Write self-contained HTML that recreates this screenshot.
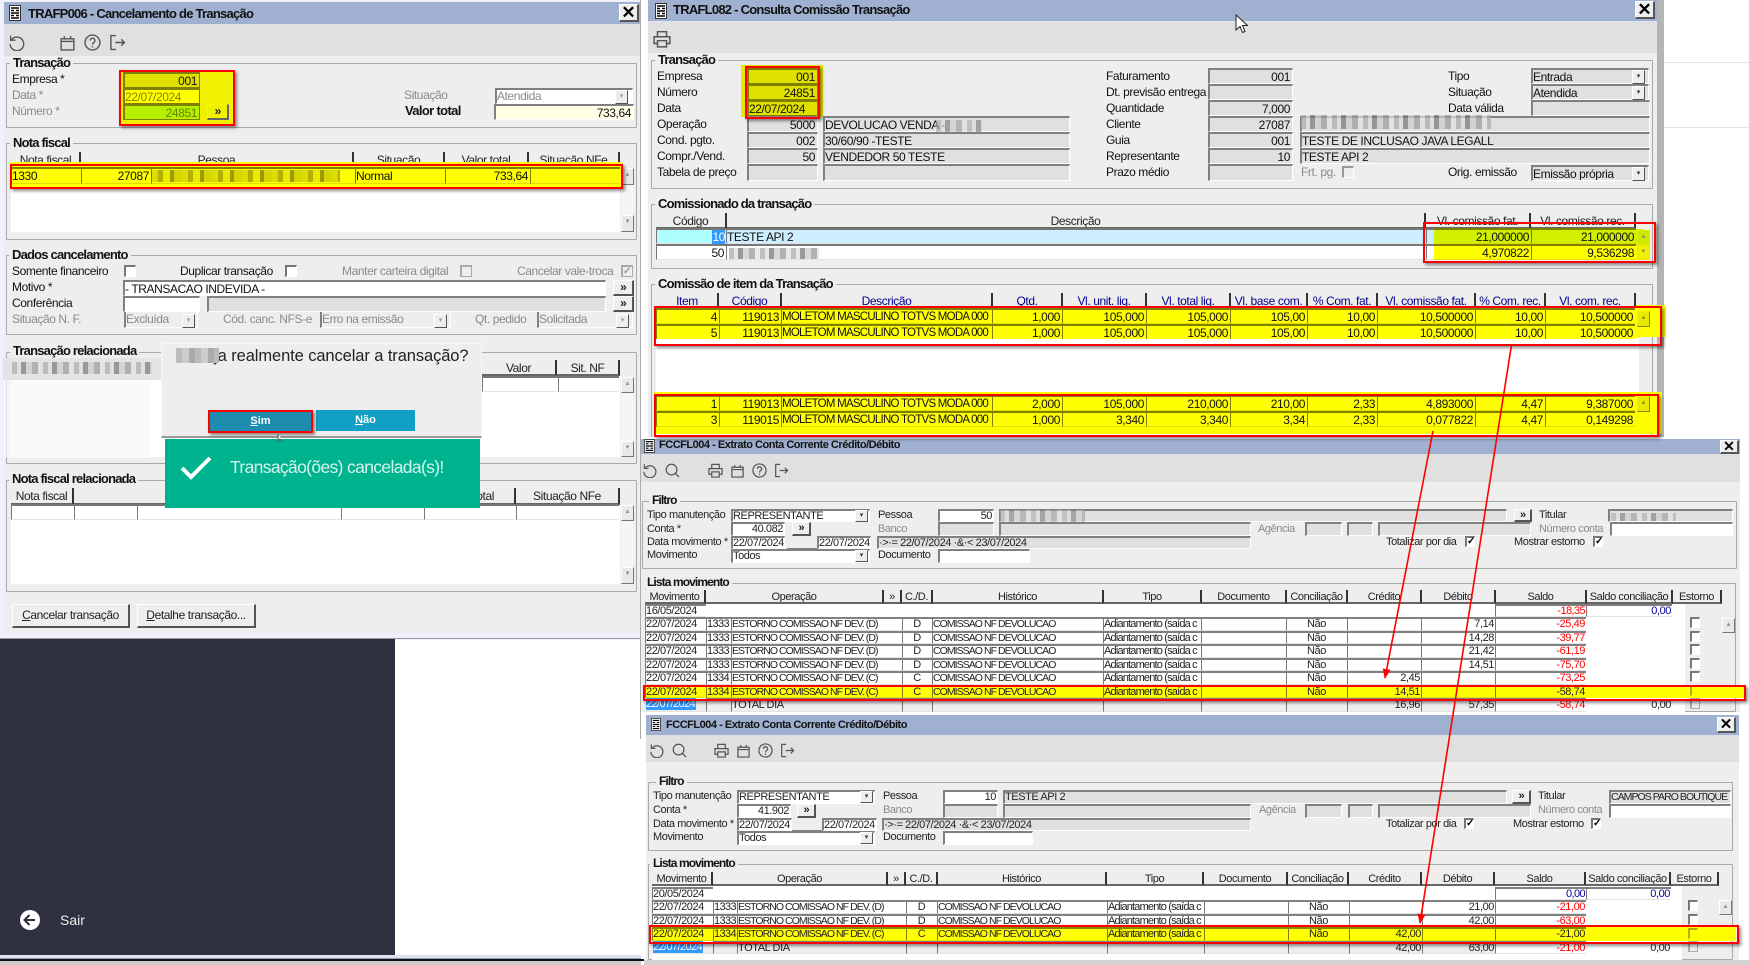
<!DOCTYPE html>
<html lang="pt"><head><meta charset="utf-8"><title>Transação</title>
<style>
html,body{margin:0;padding:0;background:#fff}
#p{position:relative;width:1749px;height:965px;overflow:hidden;background:#fff;font:12px/14px "Liberation Sans",sans-serif;letter-spacing:-.4px;color:#111}
#p div,#p span,#p i,#p b,#p svg{position:absolute;font-style:normal;white-space:nowrap;box-sizing:border-box}
.tt{font-weight:bold;font-size:13px;letter-spacing:-.75px;color:#111;line-height:16px}
.x{background:#eee;border:1px solid #fff;border-right:2px solid #555;border-bottom:2px solid #555;font:bold 17px/15px "Liberation Sans";letter-spacing:0;text-align:center;color:#000}
.fs{border:1px solid #a9a9a9;border-radius:1px}
.lg{font-weight:bold;font-size:13px;letter-spacing:-.8px;background:#eee;padding:0 3px;line-height:14px;color:#111}
.l{line-height:14px}
.d{color:#8a8a8a}
.f{border-top:2px solid #808080;border-left:2px solid #808080;border-right:1px solid #fff;border-bottom:1px solid #fff;padding:0 2px 0 0;line-height:14px;overflow:hidden;background:#fff}
.g{background:#e0e0e0}
.ra{text-align:right}
.u{font-size:11.5px;letter-spacing:-.75px}
.bt{background:#eee;border:1px solid #fff;border-right:2px solid #555;border-bottom:2px solid #555;text-align:center;line-height:12px;font-weight:bold;color:#222;letter-spacing:-1px}
.cb{width:12px;height:12px;border:1px solid #fff;border-top:2px solid #777;border-left:2px solid #777;background:#fff}
.cd{border-color:#aaa;background:#eee}
.sb{width:13px;background:#e9e9e9;border:1px solid #fff;border-right:1px solid #777;border-bottom:1px solid #777;color:#888;font-size:7px;line-height:12px;text-align:center;letter-spacing:0}
.sel{width:13px;height:14px;background:#eee;border:1px solid #fff;border-right:1px solid #555;border-bottom:1px solid #555;font-size:7px;line-height:12px;text-align:center;letter-spacing:0;color:#333}
.h{background:#eee;border-right:2px solid #333;border-bottom:2px solid #666;text-align:center;line-height:16px;overflow:hidden;color:#222}
.hb{color:#00008b}
.rd{border:2px solid #f00;box-shadow:2px 2px 3px rgba(0,0,0,.45);z-index:30}
.rw{left:0;width:0;height:16px}
.rw i{top:0;height:100%;border-top:2px solid #777;border-left:1px solid #777;border-bottom:1px solid #e4e4e4;background:#fff;line-height:14px;padding:0 2px 0 0;overflow:hidden}
.y i{background:#ff0;border-top-color:#808000;border-left-color:#808000;border-bottom-color:#e0e000}
.r{text-align:right}.m{text-align:center}
.n{color:#f00}.bl{color:#00009a}
.blur{background:repeating-linear-gradient(90deg,#aaa 0 5px,#ddd 5px 9px,#777 9px 14px,#ccc 14px 20px,#999 20px 26px,#e2e2e2 26px 31px)}
.s2{font-size:11px;line-height:13px;letter-spacing:-.42px;color:#222}
.s2 .u2,.u2{font-size:10.5px;letter-spacing:-.95px}
.s2 .h{line-height:13px;padding-top:1px}
.s2 .rw{height:13.5px}
.s2 .rw i{line-height:11px;padding:0 1px 0 0;border-top:2px solid #808080}
.s2 .rw i:nth-child(6){letter-spacing:-.82px}
.s2 .rw i:nth-child(2){letter-spacing:-.6px}
.s2 .y i{border-top-color:#888800}
.s2 .f{line-height:11px;padding:0 1px 0 0}
.s2 .lg{font-size:12px;line-height:13px;letter-spacing:-.9px}
.s2 .l{line-height:13px}
.s2 .bt{line-height:10px}
.s2 .cb{width:10px;height:11px;font-size:10px;line-height:8px;letter-spacing:0;text-align:center;font-weight:bold;color:#000}
.s2 .sel{height:12px;line-height:9px}
.s2 .hh{height:14px}
.s2 .tt{font-size:11px;letter-spacing:-.48px}
svg.ic{fill:none;stroke:#555;stroke-width:1.3}
</style></head>
<body><div id="p">
<svg width="0" height="0" style="left:0;top:0"><defs>
<symbol id="iu" viewBox="0 0 16 16"><path d="M3.5 5.2A6.4 6.4 0 1 1 2 9.5"/><path d="M2.5 1.5V5.8H7"/></symbol>
<symbol id="ic" viewBox="0 0 16 16"><path d="M2 4.5h12v10.5H2zM2 7h12M5 2v2.5M11 2v2.5"/></symbol>
<symbol id="ih" viewBox="0 0 16 16"><circle cx="8" cy="8" r="7"/><path d="M5.8 6.2a2.2 2.2 0 1 1 3.3 1.9c-.8.5-1.1 1-1.1 2M8 11.3v1.3"/></symbol>
<symbol id="ie" viewBox="0 0 16 16"><path d="M6.5 1.5H1.8v13h4.7M6 8h8.5M11.5 5l3 3-3 3"/></symbol>
<symbol id="ip" viewBox="0 0 16 16"><path d="M4 6V1.5h8V6M4 12H1V6h14v6h-3M4 9.5h8v5.5H4z"/></symbol>
<symbol id="is" viewBox="0 0 16 16"><circle cx="7" cy="7" r="5.7"/><path d="M11 11l4 4"/></symbol>
<symbol id="doc" viewBox="0 0 12 16"><rect x=".5" y=".5" width="11" height="15" fill="#fff" stroke="#333"/><path d="M2 3h8M2 5.5h3M7 5.5h3M2 8h8M2 10.5h3M7 10.5h3M2 13h8" stroke="#000" stroke-width="1.4"/></symbol>
</defs></svg>

<!-- LEFT WINDOW -->
<div style="left:0;top:0;width:640px;height:640px;background:#f1f1fb"></div>
<div style="left:640px;top:0;width:1px;height:739px;background:#aaa"></div>
<div style="left:4px;top:2px;width:636px;height:22px;background:#9fb0d0"></div>
<div style="left:4px;top:24px;width:636px;height:32px;background:#e0e0e0"></div>
<div style="left:4px;top:56px;width:636px;height:577px;background:#eee"></div>
<svg style="left:9px;top:5px" width="12" height="16"><use href="#doc"/></svg>
<div class="tt" style="left:28px;top:6px">TRAFP006 - Cancelamento de Transação</div>
<div class="x" style="left:619px;top:4px;width:20px;height:18px">✕</div>
<svg class="ic" style="left:8px;top:34px" width="17" height="17"><use href="#iu"/></svg>
<svg class="ic" style="left:59px;top:34px" width="17" height="17"><use href="#ic"/></svg>
<svg class="ic" style="left:84px;top:34px" width="17" height="17"><use href="#ih"/></svg>
<svg class="ic" style="left:109px;top:34px" width="17" height="17"><use href="#ie"/></svg>

<div class="fs" style="left:6px;top:63px;width:631px;height:65px"></div>
<div class="lg" style="left:10px;top:56px">Transação</div>
<div class="l" style="left:12px;top:72px">Empresa *</div>
<div class="l d" style="left:12px;top:88px">Data *</div>
<div class="l d" style="left:12px;top:104px">Número *</div>
<div style="left:120px;top:71px;width:114px;height:54px;background:#f0f000"></div>
<div class="f ra" style="left:123px;top:72px;width:77px;height:16px;background:#e0e000;border-color:#808000">001</div>
<div class="f" style="left:123px;top:88px;width:77px;height:16px;background:#ff0;color:#868600;border-color:#808000">22/07/2024</div>
<div class="f ra" style="left:123px;top:104px;width:77px;height:16px;background:#b4f000;color:#6a8000;border-color:#808000">24851</div>
<div class="bt" style="left:207px;top:104px;width:22px;height:16px;background:#f0f000;border-color:#f8f800 #666 #666 #f8f800">»</div>
<div class="rd" style="left:119px;top:70px;width:116px;height:56px"></div>
<div class="l d" style="left:404px;top:88px">Situação</div>
<div class="f d" style="left:495px;top:88px;width:138px;height:16px;line-height:12px">Atendida</div>
<div class="sel" style="left:615px;top:90px;color:#999">▾</div>
<b class="l" style="left:405px;top:104px;font-size:13px;letter-spacing:-.65px">Valor total</b>
<div class="f ra" style="left:494px;top:104px;width:140px;height:16px;background:#ffffe6">733,64</div>

<div class="fs" style="left:6px;top:143px;width:631px;height:97px"></div>
<div class="lg" style="left:10px;top:136px">Nota fiscal</div>
<div style="left:11px;top:188px;width:609px;height:44px;background:#fff"></div>
<div class="h" style="left:12px;top:152px;width:69px;height:16px">Nota fiscal</div>
<div class="h" style="left:81px;top:152px;width:273px;height:16px">Pessoa</div>
<div class="h" style="left:354px;top:152px;width:91px;height:16px">Situação</div>
<div class="h" style="left:445px;top:152px;width:84px;height:16px">Valor total</div>
<div class="h" style="left:529px;top:152px;width:91px;height:16px">Situação NFe</div>
<div style="left:9px;top:162px;width:613px;height:26px;background:#ff0"></div>
<div class="rw y" style="top:167px;height:17px"><i style="left:11px;width:70px">1330</i><i class="r" style="left:81px;width:70px">27087</i><i style="left:151px;width:204px"></i><i style="left:355px;width:90px">Normal</i><i class="r" style="left:445px;width:85px">733,64</i><i style="left:530px;width:90px"></i></div>
<div style="left:152px;top:170px;width:188px;height:12px;background:repeating-linear-gradient(90deg,#d8d800 0 6px,#a8a800 6px 11px,#e8e800 11px 18px,#909000 18px 22px,#d0d000 22px 30px);opacity:.9"></div>
<div class="sb" style="left:621px;top:168px;height:17px">▴</div>
<div class="sb" style="left:621px;top:215px;height:17px">▾</div>
<div style="left:621px;top:185px;width:13px;height:30px;background:#f5f5f5"></div>
<div class="rd" style="left:10px;top:164px;width:613px;height:25px"></div>

<div class="fs" style="left:6px;top:255px;width:631px;height:80px"></div>
<div class="lg" style="left:9px;top:248px">Dados cancelamento</div>
<div class="l" style="left:12px;top:264px">Somente financeiro</div>
<div class="cb" style="left:124px;top:265px"></div>
<div class="l" style="left:180px;top:264px">Duplicar transação</div>
<div class="cb" style="left:285px;top:265px"></div>
<div class="l d" style="left:342px;top:264px">Manter carteira digital</div>
<div class="cb cd" style="left:460px;top:265px"></div>
<div class="l d" style="left:517px;top:264px">Cancelar vale-troca</div>
<div class="cb cd" style="left:621px;top:265px;color:#999;font:bold 10px/9px 'Liberation Sans'">✓</div>
<div class="l" style="left:12px;top:280px">Motivo *</div>
<div class="f" style="left:123px;top:280px;width:483px;height:16px">- TRANSACAO INDEVIDA -</div>
<div class="bt" style="left:613px;top:280px;width:21px;height:16px">»</div>
<div class="l" style="left:12px;top:296px">Conferência</div>
<div class="f" style="left:123px;top:296px;width:77px;height:16px"></div>
<div class="f g" style="left:207px;top:296px;width:399px;height:16px"></div>
<div class="bt" style="left:613px;top:296px;width:21px;height:16px">»</div>
<div class="l d" style="left:12px;top:312px">Situação N. F.</div>
<div class="f d" style="left:124px;top:312px;width:74px;height:16px;background:#eee;border-top:0">Excluída</div>
<div class="sel" style="left:182px;top:314px;color:#999">▾</div>
<div class="l d" style="left:223px;top:312px">Cód. canc. NFS-e</div>
<div class="f d" style="left:320px;top:312px;width:131px;height:16px;background:#eee;border-top:0">Erro na emissão</div>
<div class="sel" style="left:434px;top:314px;color:#999">▾</div>
<div class="l d" style="left:475px;top:312px">Qt. pedido</div>
<div class="f d" style="left:537px;top:312px;width:96px;height:16px;background:#eee;border-top:0">Solicitada</div>
<div class="sel" style="left:616px;top:314px;color:#999">▾</div>

<div class="fs" style="left:6px;top:352px;width:631px;height:112px"></div>
<div style="left:11px;top:376px;width:609px;height:81px;background:#fff"></div>
<div class="lg" style="left:10px;top:344px">Transação relacionada</div>
<div style="left:3px;top:358px;width:160px;height:22px;background:#e4e4e4"></div>
<div class="blur" style="left:12px;top:362px;width:140px;height:12px;opacity:.7"></div>
<div style="left:3px;top:380px;width:148px;height:78px;background:#f8f8f8;opacity:.7"></div>
<div class="h" style="left:482px;top:360px;width:75px;height:16px">Valor</div>
<div class="h" style="left:557px;top:360px;width:63px;height:16px">Sit. NF</div>
<div class="rw" style="top:376px;height:16px"><i style="left:482px;width:76px"></i><i style="left:558px;width:61px"></i></div>
<div class="sb" style="left:621px;top:377px;height:16px">▴</div>
<div class="sb" style="left:621px;top:441px;height:16px">▾</div>
<div style="left:621px;top:393px;width:13px;height:48px;background:#f5f5f5"></div>

<div class="fs" style="left:6px;top:480px;width:631px;height:112px"></div>
<div style="left:11px;top:505px;width:609px;height:79px;background:#fff"></div>
<div class="lg" style="left:9px;top:472px">Nota fiscal relacionada</div>
<div class="h" style="left:11px;top:488px;width:63px;height:17px">Nota fiscal</div>
<div class="h" style="left:74px;top:488px;width:442px;height:17px;text-align:right;padding-right:20px">Valor total</div>
<div class="h" style="left:516px;top:488px;width:104px;height:17px">Situação NFe</div>
<div class="rw" style="top:504px;height:16px"><i style="left:11px;width:63px"></i><i style="left:74px;width:63px"></i><i style="left:137px;width:204px"></i><i style="left:341px;width:83px"></i><i style="left:424px;width:92px"></i><i style="left:516px;width:103px"></i></div>
<div class="sb" style="left:621px;top:505px;height:16px">▴</div>
<div class="sb" style="left:621px;top:567px;height:17px">▾</div>
<div style="left:621px;top:521px;width:13px;height:46px;background:#f5f5f5"></div>
<div class="bt" style="left:12px;top:604px;width:118px;height:24px;line-height:21px;font-weight:normal;letter-spacing:-.4px"><u>C</u>ancelar transação</div>
<div class="bt" style="left:137px;top:604px;width:119px;height:24px;line-height:21px;font-weight:normal;letter-spacing:-.4px"><u>D</u>etalhe transação...</div>

<!-- dialog -->
<div style="left:161px;top:343px;width:321px;height:95px;background:#eee;border:1px solid #f6f6f6;border-bottom:2px solid #999"></div>
<div style="left:176px;top:347px;font-size:16.5px;line-height:18px;letter-spacing:-.1px;color:#222">Deseja realmente cancelar a transação?</div>
<div style="left:176px;top:348px;width:43px;height:15px;background:repeating-linear-gradient(90deg,#bbb 0 6px,#ccc 6px 13px,#aaa 13px 19px)"></div>
<div style="left:210px;top:412px;width:101px;height:19px;background:#1e8cae;color:#fff;font:bold 11px/19px 'Liberation Sans';letter-spacing:0;text-align:center"><u>S</u>im</div>
<div class="rd" style="left:208px;top:410px;width:105px;height:23px"></div>
<div style="left:316px;top:410px;width:99px;height:21px;background:#11a0c4;color:#fff;font:bold 11px/21px 'Liberation Sans';letter-spacing:0;text-align:center"><u>N</u>ão</div>
<div style="left:165px;top:439px;width:315px;height:69px;background:#00b38f"></div>
<svg style="left:180px;top:456px" width="32" height="24"><path d="M2 12l9 9L30 2" fill="none" stroke="#fff" stroke-width="4"/></svg>
<div style="left:230px;top:457px;font-size:17.5px;line-height:20px;letter-spacing:-.65px;color:#d5f3ec">Transação(ões) cancelada(s)!</div>
<svg style="left:277px;top:434px" width="9" height="8"><path d="M1 0v7l2-2 3 2" fill="#fff" stroke="#555"/></svg>

<!-- sidebar -->
<div style="left:0;top:633px;width:640px;height:6px;background:#f1f1fb;border-bottom:1px solid #999"></div>
<div style="left:0;top:639px;width:395px;height:316px;background:#2f3140"></div>
<svg style="left:19px;top:909px" width="22" height="22"><circle cx="11" cy="11" r="10" fill="#fff"/><path d="M16 11H6M10.5 6l-5 5 5 5" fill="none" stroke="#2f3140" stroke-width="2"/></svg>
<div style="left:60px;top:912px;color:#eee;font-size:14px;line-height:16px;letter-spacing:0">Sair</div>
<div style="left:0;top:955px;width:641px;height:3px;background:#dfe3ee"></div>
<div style="left:0;top:958px;width:641px;height:1px;background:#8fa0b8"></div>
<div style="left:0;top:959px;width:644px;height:2px;background:#111"></div>
<div style="left:0;top:961px;width:641px;height:4px;background:#ccc"></div>

<!-- white-side hairlines -->
<div style="left:1664px;top:62px;width:85px;height:1px;background:#e2e2e2"></div>
<div style="left:1664px;top:127px;width:85px;height:1px;background:#e2e2e2"></div>

<!-- TOP RIGHT WINDOW -->
<div style="left:648px;top:0;width:1009px;height:21px;background:#9fb0d0"></div>
<div style="left:648px;top:21px;width:1009px;height:1px;background:#dfe6f2"></div>
<div style="left:648px;top:22px;width:1009px;height:31px;background:#e0e0e0"></div>
<div style="left:648px;top:53px;width:1009px;height:384px;background:#eee"></div>
<div style="left:1657px;top:0;width:7px;height:437px;background:#b4b4b4"></div>
<svg style="left:655px;top:3px" width="12" height="16"><use href="#doc"/></svg>
<div class="tt" style="left:673px;top:2px">TRAFL082 - Consulta Comissão Transação</div>
<div class="x" style="left:1635px;top:1px;width:20px;height:18px">✕</div>
<svg style="left:1235px;top:14px" width="13" height="20"><path d="M1 1v15l4-3.5 2.5 6 2.5-1-2.5-6h5z" fill="#fff" stroke="#222"/></svg>
<svg class="ic" style="left:653px;top:30px" width="18" height="18"><use href="#ip"/></svg>

<div class="fs" style="left:651px;top:60px;width:1002px;height:129px"></div>
<div class="lg" style="left:655px;top:53px">Transação</div>
<div class="l" style="left:657px;top:69px">Empresa</div>
<div class="l" style="left:657px;top:85px">Número</div>
<div class="l" style="left:657px;top:101px">Data</div>
<div class="l" style="left:657px;top:117px">Operação</div>
<div class="l" style="left:657px;top:133px">Cond. pgto.</div>
<div class="l" style="left:657px;top:149px">Compr./Vend.</div>
<div class="l" style="left:657px;top:165px">Tabela de preço</div>
<div style="left:741px;top:65px;width:82px;height:52px;background:#e8e800"></div>
<div class="f g ra" style="left:747px;top:68px;width:71px;height:16px;background:#e0e000;border-color:#808000">001</div>
<div class="f g ra" style="left:747px;top:84px;width:71px;height:16px;background:#e0e000;border-color:#808000">24851</div>
<div class="f g" style="left:747px;top:100px;width:71px;height:16px;background:#e0e000;border-color:#808000">22/07/2024</div>
<div class="rd" style="left:745px;top:66px;width:75px;height:53px"></div>
<div class="f g ra" style="left:747px;top:116px;width:71px;height:16px">5000</div>
<div class="f g ra" style="left:747px;top:132px;width:71px;height:16px">002</div>
<div class="f g ra" style="left:747px;top:148px;width:71px;height:16px">50</div>
<div class="f g" style="left:747px;top:164px;width:71px;height:17px"></div>
<div class="f g" style="left:823px;top:116px;width:247px;height:16px">DEVOLUCAO VENDA -</div>
<div class="blur" style="left:936px;top:120px;width:46px;height:12px;opacity:.6"></div>
<div class="f g" style="left:823px;top:132px;width:247px;height:16px">30/60/90 -TESTE</div>
<div class="f g" style="left:823px;top:148px;width:247px;height:16px">VENDEDOR 50 TESTE</div>
<div class="f g" style="left:823px;top:164px;width:247px;height:17px"></div>
<div class="l" style="left:1106px;top:69px">Faturamento</div>
<div class="l" style="left:1106px;top:85px">Dt. previsão entrega</div>
<div class="l" style="left:1106px;top:101px">Quantidade</div>
<div class="l" style="left:1106px;top:117px">Cliente</div>
<div class="l" style="left:1106px;top:133px">Guia</div>
<div class="l" style="left:1106px;top:149px">Representante</div>
<div class="l" style="left:1106px;top:165px">Prazo médio</div>
<div class="f g ra" style="left:1208px;top:68px;width:85px;height:16px">001</div>
<div class="f g ra" style="left:1208px;top:84px;width:85px;height:16px"></div>
<div class="f g ra" style="left:1208px;top:100px;width:85px;height:16px">7,000</div>
<div class="f g ra" style="left:1208px;top:116px;width:85px;height:16px">27087</div>
<div class="f g ra" style="left:1208px;top:132px;width:85px;height:16px">001</div>
<div class="f g ra" style="left:1208px;top:148px;width:85px;height:16px">10</div>
<div class="f g ra" style="left:1208px;top:164px;width:85px;height:17px"></div>
<div class="f g" style="left:1300px;top:116px;width:350px;height:16px"></div>
<div class="blur" style="left:1301px;top:115px;width:190px;height:14px;opacity:.7"></div>
<div class="f g" style="left:1300px;top:132px;width:350px;height:16px">TESTE DE INCLUSAO JAVA LEGALL</div>
<div class="f g" style="left:1300px;top:148px;width:350px;height:16px">TESTE API 2</div>
<div class="l d" style="left:1301px;top:165px">Frt. pg.</div>
<div class="cb cd" style="left:1342px;top:166px;border-color:#999 #fff #fff #999"></div>
<div class="l" style="left:1448px;top:69px">Tipo</div>
<div class="l" style="left:1448px;top:85px">Situação</div>
<div class="l" style="left:1448px;top:101px">Data válida</div>
<div class="l" style="left:1448px;top:165px">Orig. emissão</div>
<div class="f g" style="left:1531px;top:68px;width:118px;height:16px">Entrada</div>
<div class="sel" style="left:1632px;top:70px;background:#eee">▾</div>
<div class="f g" style="left:1531px;top:84px;width:118px;height:16px">Atendida</div>
<div class="sel" style="left:1632px;top:86px;background:#eee">▾</div>
<div class="f g" style="left:1531px;top:100px;width:119px;height:16px"></div>
<div class="f g" style="left:1531px;top:165px;width:118px;height:16px">Emissão própria</div>
<div class="sel" style="left:1632px;top:167px;background:#eee">▾</div>

<div class="fs" style="left:651px;top:204px;width:1002px;height:65px"></div>
<div class="lg" style="left:655px;top:197px">Comissionado da transação</div>
<div class="h" style="left:656px;top:213px;width:71px;height:16px">Código</div>
<div class="h" style="left:727px;top:213px;width:699px;height:16px">Descrição</div>
<div class="h" style="left:1426px;top:213px;width:105px;height:16px">Vl. comissão fat.</div>
<div class="h" style="left:1531px;top:213px;width:105px;height:16px">Vl. comissão rec.</div>
<div class="rw" style="top:228px;height:16px"><i style="left:656px;width:70px;background:#b0ffff;color:#fff"></i><i style="left:726px;width:700px;background:#cdeeff">TESTE API 2</i><i style="left:1426px;width:105px;background:#cdeeff"></i></div>
<div style="left:712px;top:230px;width:13px;height:14px;background:#3399ff;color:#fff;text-align:right;line-height:14px">10</div>
<div class="rw" style="top:244px;height:16px"><i class="r" style="left:656px;width:70px">50</i><i style="left:726px;width:700px"></i><i style="left:1426px;width:105px"></i></div>
<div class="blur" style="left:729px;top:248px;width:90px;height:11px;opacity:.75"></div>
<div style="left:1434px;top:229px;width:210px;height:16px;background:#d0f000"></div>
<div style="left:1434px;top:245px;width:210px;height:15px;background:#ff0"></div>
<div class="rw y" style="top:228px;height:16px"><i class="r" style="left:1434px;width:97px;background:#d0f000;border-left:0">21,000000</i><i class="r" style="left:1531px;width:105px;background:#d0f000">21,000000</i></div>
<div class="rw y" style="top:244px;height:16px"><i class="r" style="left:1434px;width:97px;border-left:0">4,970822</i><i class="r" style="left:1531px;width:105px">9,536298</i></div>
<div class="sb" style="left:1637px;top:230px;height:15px;background:#d0e800;border-color:#e8e800">▴</div>
<div class="sb" style="left:1637px;top:245px;height:15px;background:#f0f000;border-color:#e8e800">▾</div>
<div class="rd" style="left:1423px;top:222px;width:233px;height:41px"></div>

<div class="fs" style="left:651px;top:284px;width:1002px;height:160px"></div>
<div class="lg" style="left:655px;top:277px">Comissão de item da Transação</div>
<div style="left:656px;top:309px;width:983px;height:126px;background:#fff"></div>
<div class="h hb" style="left:657px;top:293px;width:62px;height:16px"><u>Item</u></div>
<div class="h hb" style="left:719px;top:293px;width:63px;height:16px"><u>Código</u></div>
<div class="h hb" style="left:782px;top:293px;width:211px;height:16px"><u>Descrição</u></div>
<div class="h hb" style="left:993px;top:293px;width:70px;height:16px"><u>Qtd.</u></div>
<div class="h hb" style="left:1063px;top:293px;width:84px;height:16px"><u>Vl. unit. liq.</u></div>
<div class="h hb" style="left:1147px;top:293px;width:84px;height:16px"><u>Vl. total liq.</u></div>
<div class="h hb" style="left:1231px;top:293px;width:77px;height:16px"><u>Vl. base com.</u></div>
<div class="h hb" style="left:1308px;top:293px;width:70px;height:16px"><u>% Com. fat.</u></div>
<div class="h hb" style="left:1378px;top:293px;width:98px;height:16px"><u>Vl. comissão fat.</u></div>
<div class="h hb" style="left:1476px;top:293px;width:70px;height:16px"><u>% Com. rec.</u></div>
<div class="h hb" style="left:1546px;top:293px;width:90px;height:16px"><u>Vl. com. rec.</u></div>
<div style="left:1636px;top:305px;width:30px;height:32px;background:#ff0"></div>
<div style="left:654px;top:306px;width:985px;height:32px;background:#ff0"></div>
<div class="rw y" style="top:308px;height:16px"><i class="r" style="left:656px;width:63px">4</i><i class="r" style="left:719px;width:62px">119013</i><i class="u" style="left:781px;width:211px">MOLETOM MASCULINO TOTVS MODA 000</i><i class="r" style="left:992px;width:70px">1,000</i><i class="r" style="left:1062px;width:84px">105,000</i><i class="r" style="left:1146px;width:84px">105,000</i><i class="r" style="left:1230px;width:77px">105,00</i><i class="r" style="left:1307px;width:70px">10,00</i><i class="r" style="left:1377px;width:98px">10,500000</i><i class="r" style="left:1475px;width:70px">10,00</i><i class="r" style="left:1545px;width:90px">10,500000</i></div>
<div class="rw y" style="top:324px;height:16px"><i class="r" style="left:656px;width:63px">5</i><i class="r" style="left:719px;width:62px">119013</i><i class="u" style="left:781px;width:211px">MOLETOM MASCULINO TOTVS MODA 000</i><i class="r" style="left:992px;width:70px">1,000</i><i class="r" style="left:1062px;width:84px">105,000</i><i class="r" style="left:1146px;width:84px">105,000</i><i class="r" style="left:1230px;width:77px">105,00</i><i class="r" style="left:1307px;width:70px">10,00</i><i class="r" style="left:1377px;width:98px">10,500000</i><i class="r" style="left:1475px;width:70px">10,00</i><i class="r" style="left:1545px;width:90px">10,500000</i></div>
<div style="left:656px;top:339px;width:980px;height:1px;background:#fff"></div>
<div class="sb" style="left:1637px;top:311px;height:16px;background:#e8e800;border-color:#f0f000 #888800 #888800 #f0f000;color:#888800">▴</div>
<div class="rd" style="left:654px;top:306px;width:1008px;height:40px"></div>
<div style="left:654px;top:392px;width:1008px;height:42px;background:#ff0"></div>
<div class="rw y" style="top:395px;height:16px"><i class="r" style="left:656px;width:63px">1</i><i class="r" style="left:719px;width:62px">119013</i><i class="u" style="left:781px;width:211px">MOLETOM MASCULINO TOTVS MODA 000</i><i class="r" style="left:992px;width:70px">2,000</i><i class="r" style="left:1062px;width:84px">105,000</i><i class="r" style="left:1146px;width:84px">210,000</i><i class="r" style="left:1230px;width:77px">210,00</i><i class="r" style="left:1307px;width:70px">2,33</i><i class="r" style="left:1377px;width:98px">4,893000</i><i class="r" style="left:1475px;width:70px">4,47</i><i class="r" style="left:1545px;width:90px">9,387000</i></div>
<div class="rw y" style="top:411px;height:16px"><i class="r" style="left:656px;width:63px">3</i><i class="r" style="left:719px;width:62px">119015</i><i class="u" style="left:781px;width:211px">MOLETOM MASCULINO TOTVS MODA 000</i><i class="r" style="left:992px;width:70px">1,000</i><i class="r" style="left:1062px;width:84px">3,340</i><i class="r" style="left:1146px;width:84px">3,340</i><i class="r" style="left:1230px;width:77px">3,34</i><i class="r" style="left:1307px;width:70px">2,33</i><i class="r" style="left:1377px;width:98px">0,077822</i><i class="r" style="left:1475px;width:70px">4,47</i><i class="r" style="left:1545px;width:90px">0,149298</i></div>
<div class="sb" style="left:1637px;top:396px;height:16px;background:#e8e800;border-color:#f0f000 #888800 #888800 #f0f000;color:#888800">▴</div>
<div class="rd" style="left:654px;top:394px;width:1005px;height:43px"></div>

<!-- BOTTOM WINDOW 1 -->
<div class="s2">
<div style="left:641px;top:437px;width:1099px;height:2px;background:#fff"></div>
<div style="left:641px;top:439px;width:1099px;height:15px;background:#9fb0d0"></div>
<div style="left:641px;top:454px;width:1099px;height:28px;background:#e0e0e0"></div>
<div style="left:641px;top:482px;width:1099px;height:230px;background:#eee"></div>
<svg style="left:644px;top:439px" width="11" height="14"><use href="#doc"/></svg>
<div class="tt" style="left:659px;top:437px">FCCFL004 - Extrato Conta Corrente Crédito/Débito</div>
<div class="x" style="left:1720px;top:440px;width:19px;height:14px;font-size:14px;line-height:11px">✕</div>
<svg class="ic" style="left:642px;top:463px" width="15" height="15"><use href="#iu"/></svg>
<svg class="ic" style="left:665px;top:463px" width="15" height="15"><use href="#is"/></svg>
<svg class="ic" style="left:708px;top:463px" width="15" height="15"><use href="#ip"/></svg>
<svg class="ic" style="left:730px;top:463px" width="15" height="15"><use href="#ic"/></svg>
<svg class="ic" style="left:752px;top:463px" width="15" height="15"><use href="#ih"/></svg>
<svg class="ic" style="left:774px;top:463px" width="15" height="15"><use href="#ie"/></svg>
<div class="fs" style="left:642px;top:501px;width:1095px;height:68px"></div>
<div class="lg" style="left:649px;top:494px">Filtro</div>
<div class="l" style="left:647px;top:509px">Tipo manutenção</div>
<div class="l" style="left:647px;top:523px">Conta *</div>
<div class="l" style="left:647px;top:536px">Data movimento *</div>
<div class="l" style="left:647px;top:549px">Movimento</div>
<div class="f" style="left:731px;top:509px;width:139px;height:13px">REPRESENTANTE</div>
<div class="sel" style="left:855px;top:510px">▾</div>
<div class="f ra" style="left:731px;top:522px;width:54px;height:14px">40.082</div>
<div class="bt" style="left:792px;top:522px;width:19px;height:14px">»</div>
<div class="f" style="left:731px;top:536px;width:54px;height:13px">22/07/2024</div>
<div class="f" style="left:817px;top:536px;width:54px;height:13px">22/07/2024</div>
<div style="left:787px;top:548px;width:30px;height:1px;background:#808080"></div>
<div class="f" style="left:731px;top:549px;width:139px;height:14px">Todos</div>
<div class="sel" style="left:855px;top:550px">▾</div>
<div class="l" style="left:878px;top:509px">Pessoa</div>
<div class="l d" style="left:878px;top:523px">Banco</div>
<div class="l" style="left:878px;top:549px">Documento</div>
<div class="f ra" style="left:938px;top:509px;width:56px;height:13px">50</div>
<div class="f g" style="left:938px;top:522px;width:56px;height:14px"></div>
<div class="f g" style="left:999px;top:509px;width:508px;height:13px"></div>
<div class="blur" style="left:1000px;top:510px;width:85px;height:14px;opacity:.55"></div>
<div class="f g" style="left:999px;top:522px;width:252px;height:14px"></div>
<div class="f g" style="left:877px;top:536px;width:374px;height:13px">·&gt;·= 22/07/2024 ·&amp;·&lt; 23/07/2024</div>
<div class="f" style="left:938px;top:549px;width:92px;height:14px"></div>
<div class="l d" style="left:1258px;top:523px">Agência</div>
<div class="f g" style="left:1305px;top:522px;width:37px;height:14px"></div>
<div class="f g" style="left:1347px;top:522px;width:26px;height:14px"></div>
<div class="f g" style="left:1378px;top:522px;width:153px;height:14px"></div>
<div class="bt" style="left:1514px;top:509px;width:18px;height:13px">»</div>
<div class="l" style="left:1539px;top:509px">Titular</div>
<div class="l d" style="left:1539px;top:523px">Número conta</div>
<div class="f g" style="left:1608px;top:509px;width:125px;height:13px"></div>
<div class="blur" style="left:1611px;top:513px;width:65px;height:8px;opacity:.6"></div>
<div class="f" style="left:1610px;top:522px;width:123px;height:14px"></div>
<div class="l" style="left:1386px;top:536px">Totalizar por dia</div>
<div class="cb" style="left:1465px;top:536px">✓</div>
<div class="l" style="left:1514px;top:536px">Mostrar estorno</div>
<div class="cb" style="left:1593px;top:536px">✓</div>

<div class="fs" style="left:645px;top:583px;width:1091px;height:129px"></div>
<div style="left:645px;top:604px;width:1040px;height:108px;background:#fff"></div>
<div class="lg" style="left:644px;top:576px">Lista movimento</div>
<div class="h hh" style="left:645px;top:590px;width:61px">Movimento</div>
<div class="h hh" style="left:706px;top:590px;width:178px">Operação</div>
<div class="h hh" style="left:884px;top:590px;width:18px">»</div>
<div class="h hh" style="left:902px;top:590px;width:31px">C./D.</div>
<div class="h hh" style="left:933px;top:590px;width:171px">Histórico</div>
<div class="h hh" style="left:1104px;top:590px;width:98px">Tipo</div>
<div class="h hh" style="left:1202px;top:590px;width:85px">Documento</div>
<div class="h hh" style="left:1287px;top:590px;width:61px">Conciliação</div>
<div class="h hh" style="left:1348px;top:590px;width:74px">Crédito</div>
<div class="h hh" style="left:1422px;top:590px;width:74px">Débito</div>
<div class="h hh" style="left:1496px;top:590px;width:91px">Saldo</div>
<div class="h hh" style="left:1587px;top:590px;width:86px">Saldo conciliação</div>
<div class="h hh" style="left:1673px;top:590px;width:49px">Estorno</div>
<div class="rw" style="top:603.5px"><i style="left:645px;width:61px">16/05/2024</i><i class="r n" style="left:1495px;width:91px">-18,35</i><i class="r bl" style="left:1586px;width:86px">0,00</i></div>
<div class="rw" style="top:617px"><i style="left:645px;width:61px">22/07/2024</i><i style="left:706px;width:25px">1333</i><i class="u2" style="left:731px;width:171px">ESTORNO COMISSAO NF DEV. (D)</i><i class="m" style="left:902px;width:30px">D</i><i class="u2" style="left:932px;width:171px">COMISSAO NF DEVOLUCAO</i><i style="left:1103px;width:98px">Adiantamento (saída c</i><i style="left:1201px;width:85px"></i><i class="m" style="left:1286px;width:61px">Não</i><i style="left:1347px;width:74px"></i><i class="r" style="left:1421px;width:74px">7,14</i><i class="r n" style="left:1495px;width:91px">-25,49</i></div>
<div class="rw" style="top:630.5px"><i style="left:645px;width:61px">22/07/2024</i><i style="left:706px;width:25px">1333</i><i class="u2" style="left:731px;width:171px">ESTORNO COMISSAO NF DEV. (D)</i><i class="m" style="left:902px;width:30px">D</i><i class="u2" style="left:932px;width:171px">COMISSAO NF DEVOLUCAO</i><i style="left:1103px;width:98px">Adiantamento (saída c</i><i style="left:1201px;width:85px"></i><i class="m" style="left:1286px;width:61px">Não</i><i style="left:1347px;width:74px"></i><i class="r" style="left:1421px;width:74px">14,28</i><i class="r n" style="left:1495px;width:91px">-39,77</i></div>
<div class="rw" style="top:644px"><i style="left:645px;width:61px">22/07/2024</i><i style="left:706px;width:25px">1333</i><i class="u2" style="left:731px;width:171px">ESTORNO COMISSAO NF DEV. (D)</i><i class="m" style="left:902px;width:30px">D</i><i class="u2" style="left:932px;width:171px">COMISSAO NF DEVOLUCAO</i><i style="left:1103px;width:98px">Adiantamento (saída c</i><i style="left:1201px;width:85px"></i><i class="m" style="left:1286px;width:61px">Não</i><i style="left:1347px;width:74px"></i><i class="r" style="left:1421px;width:74px">21,42</i><i class="r n" style="left:1495px;width:91px">-61,19</i></div>
<div class="rw" style="top:657.5px"><i style="left:645px;width:61px">22/07/2024</i><i style="left:706px;width:25px">1333</i><i class="u2" style="left:731px;width:171px">ESTORNO COMISSAO NF DEV. (D)</i><i class="m" style="left:902px;width:30px">D</i><i class="u2" style="left:932px;width:171px">COMISSAO NF DEVOLUCAO</i><i style="left:1103px;width:98px">Adiantamento (saída c</i><i style="left:1201px;width:85px"></i><i class="m" style="left:1286px;width:61px">Não</i><i style="left:1347px;width:74px"></i><i class="r" style="left:1421px;width:74px">14,51</i><i class="r n" style="left:1495px;width:91px">-75,70</i></div>
<div class="rw" style="top:671px"><i style="left:645px;width:61px">22/07/2024</i><i style="left:706px;width:25px">1334</i><i class="u2" style="left:731px;width:171px">ESTORNO COMISSAO NF DEV. (C)</i><i class="m" style="left:902px;width:30px">C</i><i class="u2" style="left:932px;width:171px">COMISSAO NF DEVOLUCAO</i><i style="left:1103px;width:98px">Adiantamento (saída c</i><i style="left:1201px;width:85px"></i><i class="m" style="left:1286px;width:61px">Não</i><i class="r" style="left:1347px;width:74px">2,45</i><i style="left:1421px;width:74px"></i><i class="r n" style="left:1495px;width:91px">-73,25</i></div>
<div style="left:644px;top:685px;width:1102px;height:13px;background:#ff0"></div>
<div class="rw y" style="top:684.5px"><i style="left:645px;width:61px">22/07/2024</i><i style="left:706px;width:25px">1334</i><i class="u2" style="left:731px;width:171px">ESTORNO COMISSAO NF DEV. (C)</i><i class="m" style="left:902px;width:30px">C</i><i class="u2" style="left:932px;width:171px">COMISSAO NF DEVOLUCAO</i><i style="left:1103px;width:98px">Adiantamento (saída c</i><i style="left:1201px;width:85px"></i><i class="m" style="left:1286px;width:61px">Não</i><i class="r" style="left:1347px;width:74px">14,51</i><i style="left:1421px;width:74px"></i><i class="r" style="left:1495px;width:91px">-58,74</i></div>
<div class="rw" style="top:698px"><i style="left:645px;width:61px;background:#eee;border-top:0;border-left:0"><b style="left:1px;top:0;width:50px;height:12px;background:#3399ff;color:#fff;font-weight:normal;line-height:12px;letter-spacing:-.6px">22/07/2024</b></i><i style="left:706px;width:25px;background:#eee"></i><i style="left:731px;width:171px;background:#eee">TOTAL DIA</i><i style="left:902px;width:30px;background:#eee"></i><i style="left:932px;width:171px;background:#eee"></i><i style="left:1103px;width:98px;background:#eee"></i><i style="left:1201px;width:85px;background:#eee"></i><i style="left:1286px;width:61px;background:#eee"></i><i class="r" style="left:1347px;width:74px;background:#eee">16,96</i><i class="r" style="left:1421px;width:74px;background:#eee">57,35</i><i class="r n" style="left:1495px;width:91px">-58,74</i><i class="r" style="left:1586px;width:86px;background:#fff;border:0;padding-top:2px">0,00</i></div>
<div class="cb" style="left:1690px;top:617px"></div><div class="cb" style="left:1690px;top:631px"></div><div class="cb" style="left:1690px;top:644px"></div><div class="cb" style="left:1690px;top:658px"></div><div class="cb" style="left:1690px;top:671px"></div><div class="cb" style="left:1690px;top:685px;background:#ff0;border-color:#b0b000 #ff0 #ff0 #b0b000"></div><div class="cb cd" style="left:1690px;top:698px"></div>
<div class="sb" style="left:1722px;top:618px;height:15px">▴</div>
<div class="rd" style="left:643px;top:685px;width:1103px;height:16px"></div>

<!-- BOTTOM WINDOW 2 -->
<div style="left:646px;top:712px;width:1093px;height:248px;background:#eee"></div>
<div style="left:646px;top:712px;width:1093px;height:3px;background:#fff"></div>
<div style="left:646px;top:715px;width:1093px;height:20px;background:#9fb0d0"></div>
<div style="left:646px;top:735px;width:1093px;height:27px;background:#e0e0e0"></div>
<svg style="left:651px;top:718px" width="10" height="13"><use href="#doc"/></svg>
<div class="tt" style="left:666px;top:717px">FCCFL004 - Extrato Conta Corrente Crédito/Débito</div>
<div class="x" style="left:1717px;top:717px;width:19px;height:16px;font-size:15px;line-height:13px">✕</div>
<svg class="ic" style="left:649px;top:743px" width="15" height="15"><use href="#iu"/></svg>
<svg class="ic" style="left:672px;top:743px" width="15" height="15"><use href="#is"/></svg>
<svg class="ic" style="left:714px;top:743px" width="15" height="15"><use href="#ip"/></svg>
<svg class="ic" style="left:736px;top:743px" width="15" height="15"><use href="#ic"/></svg>
<svg class="ic" style="left:758px;top:743px" width="15" height="15"><use href="#ih"/></svg>
<svg class="ic" style="left:780px;top:743px" width="15" height="15"><use href="#ie"/></svg>
<div class="fs" style="left:648px;top:782px;width:1085px;height:69px"></div>
<div class="lg" style="left:656px;top:775px">Filtro</div>
<div class="l" style="left:653px;top:790px">Tipo manutenção</div>
<div class="l" style="left:653px;top:804px">Conta *</div>
<div class="l" style="left:653px;top:818px">Data movimento *</div>
<div class="l" style="left:653px;top:831px">Movimento</div>
<div class="f" style="left:737px;top:790px;width:138px;height:14px">REPRESENTANTE</div>
<div class="sel" style="left:860px;top:791px">▾</div>
<div class="f ra" style="left:737px;top:804px;width:54px;height:14px">41.902</div>
<div class="bt" style="left:797px;top:804px;width:19px;height:14px">»</div>
<div class="f" style="left:737px;top:818px;width:55px;height:13px">22/07/2024</div>
<div class="f" style="left:822px;top:818px;width:55px;height:13px">22/07/2024</div>
<div style="left:792px;top:830px;width:30px;height:1px;background:#808080"></div>
<div class="f" style="left:737px;top:831px;width:138px;height:14px">Todos</div>
<div class="sel" style="left:860px;top:832px">▾</div>
<div class="l" style="left:883px;top:790px">Pessoa</div>
<div class="l d" style="left:883px;top:804px">Banco</div>
<div class="l" style="left:883px;top:831px">Documento</div>
<div class="f ra" style="left:943px;top:790px;width:55px;height:14px">10</div>
<div class="f g" style="left:943px;top:804px;width:55px;height:14px"></div>
<div class="f g" style="left:1003px;top:790px;width:504px;height:14px">TESTE API 2</div>
<div class="f g" style="left:1003px;top:804px;width:248px;height:14px"></div>
<div class="f g" style="left:882px;top:818px;width:369px;height:13px">·&gt;·= 22/07/2024 ·&amp;·&lt; 23/07/2024</div>
<div class="f" style="left:943px;top:831px;width:90px;height:14px"></div>
<div class="l d" style="left:1259px;top:804px">Agência</div>
<div class="f g" style="left:1305px;top:804px;width:37px;height:14px"></div>
<div class="f g" style="left:1348px;top:804px;width:25px;height:14px"></div>
<div class="f g" style="left:1378px;top:804px;width:153px;height:14px"></div>
<div class="bt" style="left:1512px;top:790px;width:19px;height:14px">»</div>
<div class="l" style="left:1538px;top:790px">Titular</div>
<div class="l d" style="left:1538px;top:804px">Número conta</div>
<div class="f g u2" style="left:1609px;top:790px;width:122px;height:14px">CAMPOS PARO BOUTIQUE</div>
<div class="f" style="left:1609px;top:804px;width:122px;height:14px"></div>
<div class="l" style="left:1386px;top:818px">Totalizar por dia</div>
<div class="cb" style="left:1464px;top:818px">✓</div>
<div class="l" style="left:1513px;top:818px">Mostrar estorno</div>
<div class="cb" style="left:1591px;top:818px">✓</div>

<div class="fs" style="left:648px;top:864px;width:1085px;height:96px"></div>
<div style="left:652px;top:886px;width:1030px;height:74px;background:#fff"></div>
<div class="lg" style="left:650px;top:857px">Lista movimento</div>
<div class="h hh" style="left:652px;top:872px;width:61px">Movimento</div>
<div class="h hh" style="left:713px;top:872px;width:175px">Operação</div>
<div class="h hh" style="left:888px;top:872px;width:18px">»</div>
<div class="h hh" style="left:906px;top:872px;width:32px">C./D.</div>
<div class="h hh" style="left:938px;top:872px;width:169px">Histórico</div>
<div class="h hh" style="left:1107px;top:872px;width:97px">Tipo</div>
<div class="h hh" style="left:1204px;top:872px;width:84px">Documento</div>
<div class="h hh" style="left:1288px;top:872px;width:61px">Conciliação</div>
<div class="h hh" style="left:1349px;top:872px;width:73px">Crédito</div>
<div class="h hh" style="left:1422px;top:872px;width:73px">Débito</div>
<div class="h hh" style="left:1495px;top:872px;width:91px">Saldo</div>
<div class="h hh" style="left:1586px;top:872px;width:85px">Saldo conciliação</div>
<div class="h hh" style="left:1671px;top:872px;width:48px">Estorno</div>
<div class="rw" style="top:886.5px"><i style="left:652px;width:61px">20/05/2024</i><i class="r bl" style="left:1495px;width:91px">0,00</i><i class="r bl" style="left:1586px;width:85px">0,00</i></div>
<div class="rw" style="top:900px"><i style="left:652px;width:61px">22/07/2024</i><i style="left:713px;width:24px">1333</i><i class="u2" style="left:737px;width:169px">ESTORNO COMISSAO NF DEV. (D)</i><i class="m" style="left:906px;width:31px">D</i><i class="u2" style="left:937px;width:170px">COMISSAO NF DEVOLUCAO</i><i style="left:1107px;width:97px">Adiantamento (saída c</i><i style="left:1204px;width:84px"></i><i class="m" style="left:1288px;width:61px">Não</i><i style="left:1349px;width:73px"></i><i class="r" style="left:1422px;width:73px">21,00</i><i class="r n" style="left:1495px;width:91px">-21,00</i></div>
<div class="rw" style="top:913.5px"><i style="left:652px;width:61px">22/07/2024</i><i style="left:713px;width:24px">1333</i><i class="u2" style="left:737px;width:169px">ESTORNO COMISSAO NF DEV. (D)</i><i class="m" style="left:906px;width:31px">D</i><i class="u2" style="left:937px;width:170px">COMISSAO NF DEVOLUCAO</i><i style="left:1107px;width:97px">Adiantamento (saída c</i><i style="left:1204px;width:84px"></i><i class="m" style="left:1288px;width:61px">Não</i><i style="left:1349px;width:73px"></i><i class="r" style="left:1422px;width:73px">42,00</i><i class="r n" style="left:1495px;width:91px">-63,00</i></div>
<div style="left:651px;top:927px;width:1085px;height:14px;background:#ff0"></div>
<div class="rw y" style="top:927px"><i style="left:652px;width:61px">22/07/2024</i><i style="left:713px;width:24px">1334</i><i class="u2" style="left:737px;width:169px">ESTORNO COMISSAO NF DEV. (C)</i><i class="m" style="left:906px;width:31px">C</i><i class="u2" style="left:937px;width:170px">COMISSAO NF DEVOLUCAO</i><i style="left:1107px;width:97px">Adiantamento (saída c</i><i style="left:1204px;width:84px"></i><i class="m" style="left:1288px;width:61px">Não</i><i class="r" style="left:1349px;width:73px">42,00</i><i style="left:1422px;width:73px"></i><i class="r" style="left:1495px;width:91px">-21,00</i></div>
<div class="rw" style="top:940.5px"><i style="left:652px;width:61px;background:#eee;border-top:0;border-left:0"><b style="left:1px;top:0;width:50px;height:12px;background:#3399ff;color:#fff;font-weight:normal;line-height:12px;letter-spacing:-.6px">22/07/2024</b></i><i style="left:713px;width:24px;background:#eee"></i><i style="left:737px;width:169px;background:#eee">TOTAL DIA</i><i style="left:906px;width:31px;background:#eee"></i><i style="left:937px;width:170px;background:#eee"></i><i style="left:1107px;width:97px;background:#eee"></i><i style="left:1204px;width:84px;background:#eee"></i><i style="left:1288px;width:61px;background:#eee"></i><i class="r" style="left:1349px;width:73px;background:#eee">42,00</i><i class="r" style="left:1422px;width:73px;background:#eee">63,00</i><i class="r n" style="left:1495px;width:91px">-21,00</i><i class="r" style="left:1586px;width:85px;background:#fff;border:0;padding-top:2px">0,00</i></div>
<div class="cb" style="left:1688px;top:900px"></div><div class="cb" style="left:1688px;top:914px"></div><div class="cb" style="left:1688px;top:928px;background:#ff0;border-color:#b0b000 #ff0 #ff0 #b0b000"></div><div class="cb cd" style="left:1688px;top:941px"></div>
<div class="sb" style="left:1719px;top:900px;height:15px">▴</div>
<div class="rd" style="left:649px;top:925px;width:1090px;height:19px"></div>
</div>

<!-- bottom strip overlay -->
<div style="left:644px;top:960px;width:1105px;height:5px;background:#d4d4d4;z-index:35"></div>

<!-- arrows -->
<svg style="left:0;top:0;z-index:40" width="1749" height="965">
<defs><marker id="ah" markerWidth="12" markerHeight="12" refX="9" refY="4" orient="auto" markerUnits="userSpaceOnUse"><path d="M0 0L10 4L0 8z" fill="#f00"/></marker></defs>
<path d="M1433 431L1385 678" stroke="#f00" stroke-width="1.6" fill="none" marker-end="url(#ah)"/>
<path d="M1511.5 345L1420 923" stroke="#f00" stroke-width="1.6" fill="none" marker-end="url(#ah)"/>
</svg>
</div></body></html>
